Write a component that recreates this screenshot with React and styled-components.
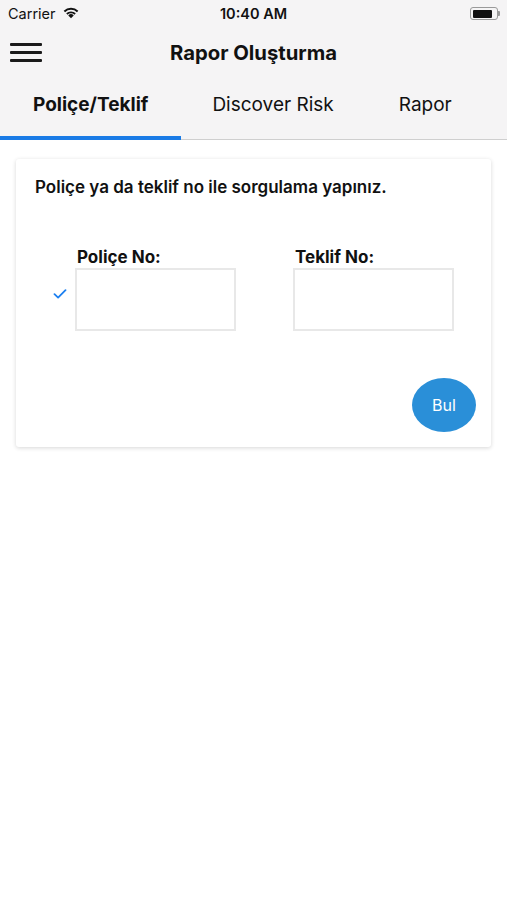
import styled, { createGlobalStyle } from "styled-components";

const GlobalStyle = createGlobalStyle`
  html, body {
    margin: 0;
    padding: 0;
    background: #ffffff;
    font-family: Inter, "Liberation Sans", Arial, sans-serif;
    color: #111111;
  }
  * {
    box-sizing: border-box;
  }
`;

const tabs = ["Poliçe/Teklif", "Discover Risk", "Rapor"];

export default function App() {
  return (
    <Page>
      <GlobalStyle />
      <Top>
        <StatusBar>
          <Carrier>
            Carrier
            <svg width="16" height="12" viewBox="0 0 14 10">
              <path
                d="M7 9.6 L4.6 7.1 A3.4 3.4 0 0 1 9.4 7.1 Z"
                fill="#111"
              />
              <path
                d="M2.8 5.3 A6 6 0 0 1 11.2 5.3 L10 6.5 A4.3 4.3 0 0 0 4 6.5 Z"
                fill="#111"
              />
              <path
                d="M0.6 3.1 A9.2 9.2 0 0 1 13.4 3.1 L12.2 4.3 A7.5 7.5 0 0 0 1.8 4.3 Z"
                fill="#111"
              />
            </svg>
          </Carrier>
          <Time>10:40 AM</Time>
          <Battery>
            <BatteryBody>
              <BatteryFill />
            </BatteryBody>
            <BatteryNub />
          </Battery>
        </StatusBar>

        <NavBar>
          <Menu>
            <span />
            <span />
            <span />
          </Menu>
          <Title>Rapor Oluşturma</Title>
        </NavBar>

        <Tabs>
          {tabs.map((t, i) => (
            <Tab key={t} $active={i === 0}>
              {t}
            </Tab>
          ))}
        </Tabs>
      </Top>

      <Content>
        <Card>
          <Heading>Poliçe ya da teklif no ile sorgulama yapınız.</Heading>

          <Fields>
            <Field>
              <Label>Poliçe No:</Label>
              <InputRow>
                <Check>
                  <svg width="14" height="10" viewBox="0 0 13 10">
                    <path
                      d="M1 5.2 L4.6 8.6 L12 1.2"
                      fill="none"
                      stroke="#1b7ff0"
                      strokeWidth="1.8"
                      strokeLinecap="round"
                      strokeLinejoin="round"
                    />
                  </svg>
                </Check>
                <Input />
              </InputRow>
            </Field>
            <Field>
              <Label>Teklif No:</Label>
              <InputRow>
                <Check />
                <Input />
              </InputRow>
            </Field>
          </Fields>

          <Actions>
            <FindButton>Bul</FindButton>
          </Actions>
        </Card>
      </Content>
    </Page>
  );
}

const Page = styled.div`
  width: 507px;
  min-height: 900px;
  background: #ffffff;
`;

const Top = styled.div`
  background: #f5f4f5;
`;

const StatusBar = styled.div`
  height: 27px;
  display: flex;
  align-items: center;
  justify-content: space-between;
  padding: 0 7px 0 8px;
  position: relative;
`;

const Carrier = styled.div`
  display: flex;
  align-items: center;
  gap: 7px;
  font-size: 14.5px;
  color: #111;

  svg {
    margin-top: -2px;
  }
`;

const Time = styled.div`
  position: absolute;
  left: 0;
  right: 0;
  text-align: center;
  font-size: 14.5px;
  font-weight: 600;
  pointer-events: none;
`;

const Battery = styled.div`
  display: flex;
  align-items: center;
`;

const BatteryBody = styled.div`
  width: 28px;
  height: 13px;
  border: 1px solid #9a9a9a;
  border-radius: 3px;
  padding: 1.5px;
`;

const BatteryFill = styled.div`
  width: 19px;
  height: 100%;
  background: #111;
  border-radius: 1px;
`;

const BatteryNub = styled.div`
  width: 2px;
  height: 5px;
  background: #9a9a9a;
  border-radius: 0 1px 1px 0;
`;

const NavBar = styled.div`
  height: 50px;
  display: flex;
  align-items: center;
  justify-content: center;
  position: relative;
`;

const Menu = styled.div`
  position: absolute;
  left: 10px;
  top: 16px;
  width: 32px;
  display: flex;
  flex-direction: column;
  gap: 5.5px;

  span {
    display: block;
    height: 2.5px;
    background: #1a1a1a;
    border-radius: 1px;
  }
`;

const Title = styled.h1`
  margin: 0;
  font-size: 20.3px;
  font-weight: 700;
  color: #111;
`;

const Tabs = styled.div`
  display: flex;
  height: 63px;
  border-bottom: 1px solid #cfcfcf;
`;

const Tab = styled.div`
  padding: 0 33px 4px;
  display: flex;
  align-items: center;
  font-size: 19px;
  font-weight: ${(p) => (p.$active ? 700 : 400)};
  color: #111;
  border-bottom: 4px solid ${(p) => (p.$active ? "#1a7be6" : "transparent")};
  margin-bottom: -1px;

  &:nth-child(2) {
    padding: 0 32px 4px 31px;
  }
`;

const Content = styled.div`
  padding: 19px 16px;
`;

const Card = styled.div`
  background: #fff;
  border-radius: 3px;
  box-shadow: 0 1px 4px rgba(0, 0, 0, 0.16);
  padding: 18px 15px 15px 19px;
`;

const Heading = styled.p`
  margin: 0;
  font-size: 17px;
  font-weight: 600;
  line-height: 20px;
`;

const Fields = styled.div`
  display: flex;
  gap: 35px;
  margin-top: 51px;
  padding-left: 18px;
`;

const Field = styled.div`
  display: flex;
  flex-direction: column;
`;

const Label = styled.div`
  margin-left: 24px;
  font-size: 17px;
  font-weight: 700;
  line-height: 19px;
`;

const InputRow = styled.div`
  display: flex;
  margin-top: 1px;
`;

const Check = styled.div`
  width: 22px;
  padding-top: 15px;
`;

const Input = styled.div`
  width: 161px;
  height: 63px;
  border: 2px solid #e8e8e8;
  background: #fff;
`;

const Actions = styled.div`
  display: flex;
  justify-content: flex-end;
  margin-top: 47px;
`;

const FindButton = styled.button`
  width: 64px;
  height: 54px;
  border: none;
  border-radius: 50%;
  background: #2a8fd8;
  color: #fff;
  font-family: inherit;
  font-size: 16px;
  padding: 0;
`;
